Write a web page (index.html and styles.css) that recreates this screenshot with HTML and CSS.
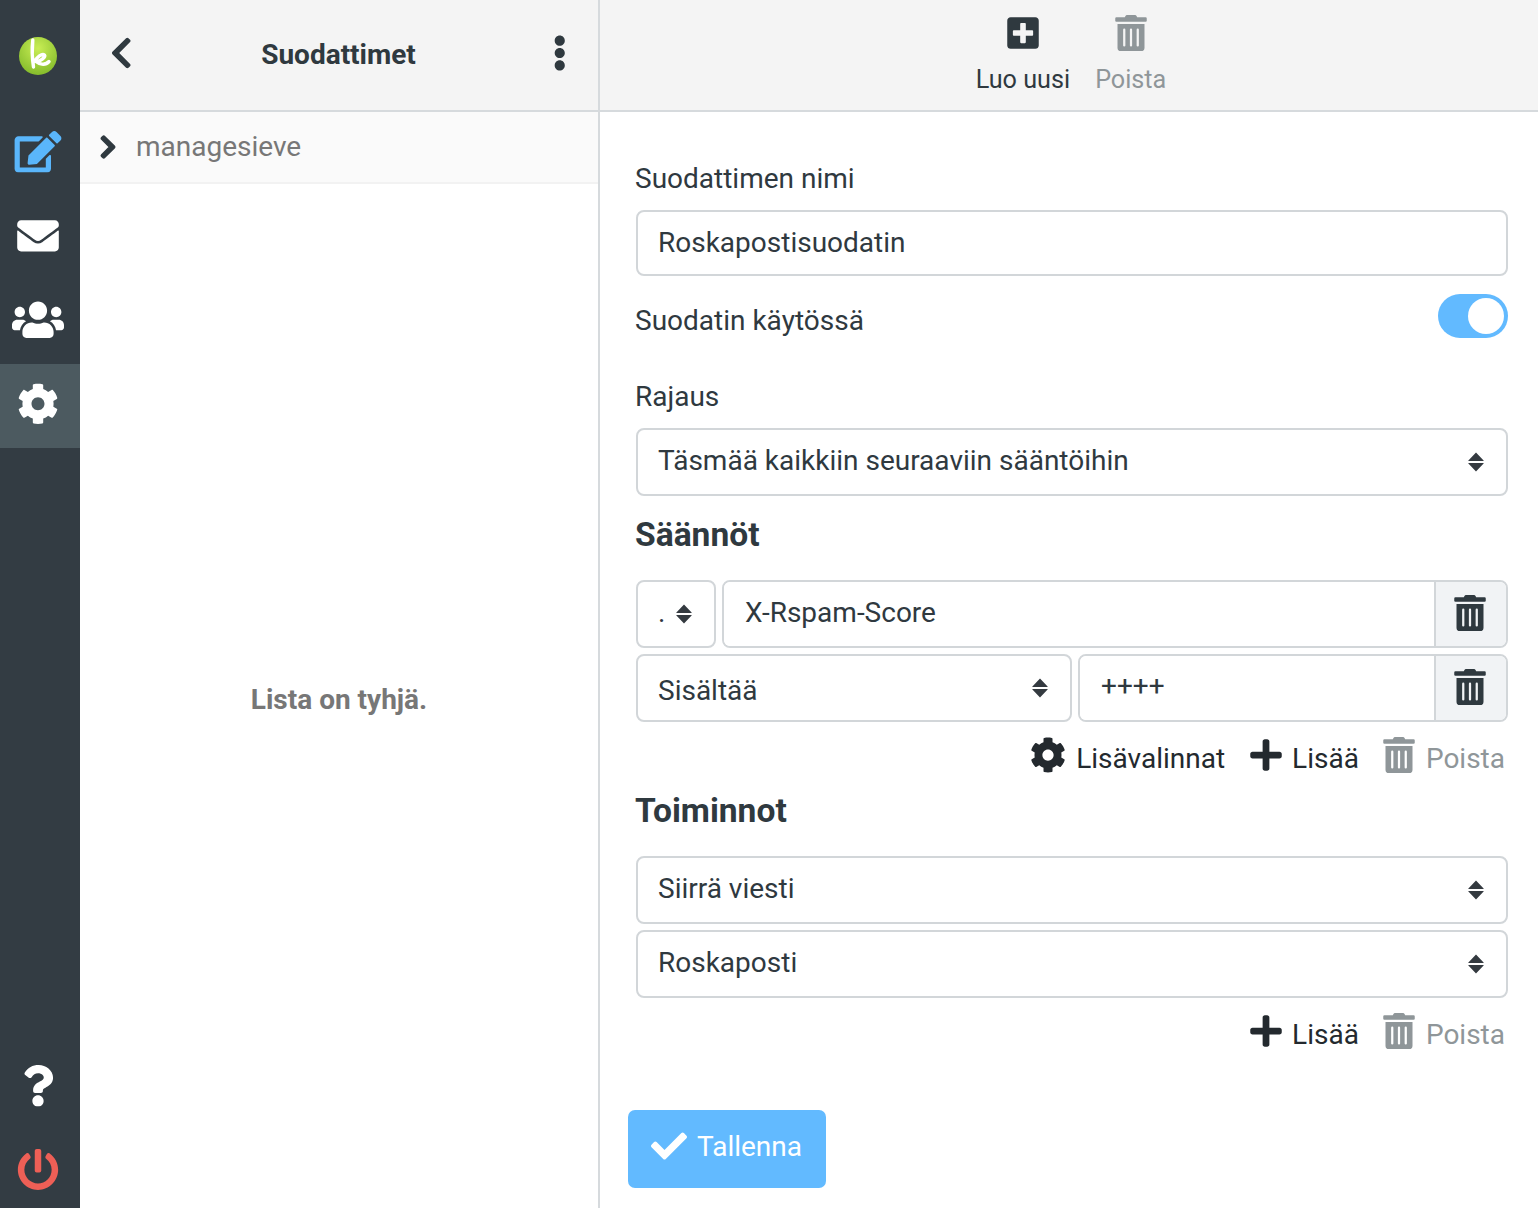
FILE: index.html
```html
<!DOCTYPE html>
<html lang="fi">
<head>
<meta charset="utf-8">
<title>Suodattimet</title>
<link rel="stylesheet" href="styles.css">
</head>
<body>
<svg class="defs" aria-hidden="true">
  <symbol id="i-chevron-left" viewBox="0 0 320 512"><path d="M34.52 239.03L228.87 44.69c9.37-9.37 24.57-9.37 33.94 0l22.67 22.67c9.36 9.36 9.37 24.52.04 33.9L131.49 256l154.02 154.75c9.34 9.38 9.32 24.54-.04 33.9l-22.67 22.67c-9.37 9.37-24.57 9.37-33.94 0L34.52 272.97c-9.37-9.37-9.37-24.57 0-33.94z"/></symbol>
  <symbol id="i-chevron-right" viewBox="0 0 320 512"><path d="M285.476 272.971L91.132 467.314c-9.373 9.373-24.569 9.373-33.941 0l-22.667-22.667c-9.357-9.357-9.375-24.522-.04-33.901L188.505 256 34.484 101.255c-9.335-9.379-9.317-24.544.04-33.901l22.667-22.667c9.373-9.373 24.569-9.373 33.941 0L285.475 239.03c9.373 9.372 9.373 24.568.001 33.941z"/></symbol>
  <symbol id="i-ellipsis" viewBox="0 0 192 512"><path d="M96 184c39.8 0 72 32.2 72 72s-32.2 72-72 72-72-32.2-72-72 32.2-72 72-72zM24 80c0 39.8 32.2 72 72 72s72-32.2 72-72S135.8 8 96 8 24 40.2 24 80zm0 352c0 39.8 32.2 72 72 72s72-32.2 72-72-32.2-72-72-72-72 32.2-72 72z"/></symbol>
  <symbol id="i-plus-square" viewBox="0 0 448 512"><path d="M400 32H48C21.5 32 0 53.5 0 80v352c0 26.5 21.5 48 48 48h352c26.5 0 48-21.5 48-48V80c0-26.5-21.5-48-48-48zm-32 252c0 6.6-5.4 12-12 12h-92v92c0 6.6-5.4 12-12 12h-56c-6.6 0-12-5.4-12-12v-92H92c-6.6 0-12-5.4-12-12v-56c0-6.6 5.4-12 12-12h92v-92c0-6.6 5.4-12 12-12h56c6.6 0 12 5.4 12 12v92h92c6.6 0 12 5.4 12 12v56z"/></symbol>
  <symbol id="i-trash" viewBox="0 0 448 512"><path d="M32 464a48 48 0 0 0 48 48h288a48 48 0 0 0 48-48V128H32zm272-256a16 16 0 0 1 32 0v224a16 16 0 0 1-32 0zm-96 0a16 16 0 0 1 32 0v224a16 16 0 0 1-32 0zm-96 0a16 16 0 0 1 32 0v224a16 16 0 0 1-32 0zM432 32H312l-9.4-18.7A24 24 0 0 0 281.1 0H166.8a23.72 23.72 0 0 0-21.4 13.3L136 32H16A16 16 0 0 0 0 48v32a16 16 0 0 0 16 16h416a16 16 0 0 0 16-16V48a16 16 0 0 0-16-16z"/></symbol>
  <symbol id="i-plus" viewBox="0 0 448 512"><path d="M416 208H272V64c0-17.67-14.33-32-32-32h-32c-17.67 0-32 14.33-32 32v144H32c-17.67 0-32 14.33-32 32v32c0 17.67 14.33 32 32 32h144v144c0 17.67 14.33 32 32 32h32c17.67 0 32-14.33 32-32V304h144c17.67 0 32-14.33 32-32v-32c0-17.67-14.33-32-32-32z"/></symbol>
  <symbol id="i-check" viewBox="0 0 512 512"><path d="M173.898 439.404l-166.4-166.4c-9.997-9.997-9.997-26.206 0-36.204l36.203-36.204c9.997-9.998 26.207-9.998 36.204 0L192 312.69 432.095 72.596c9.997-9.997 26.207-9.997 36.204 0l36.203 36.204c9.997 9.997 9.997 26.206 0 36.204l-294.4 294.401c-9.998 9.997-26.207 9.997-36.204-.001z"/></symbol>
  <symbol id="i-cog" viewBox="0 0 512 512"><path d="M487.4 315.7l-42.6-24.6c4.3-23.2 4.3-47 0-70.2l42.6-24.6c4.9-2.8 7.1-8.6 5.5-14-11.1-35.6-30-67.8-54.7-94.6-3.8-4.1-10-5.1-14.8-2.3L380.8 110c-17.9-15.4-38.5-27.3-60.8-35.1V25.8c0-5.6-3.9-10.5-9.4-11.7-36.7-8.2-74.3-7.8-109.2 0-5.5 1.2-9.4 6.1-9.4 11.7V75c-22.2 7.9-42.8 19.8-60.8 35.1L88.7 85.5c-4.9-2.8-11-1.9-14.8 2.3-24.7 26.7-43.6 58.9-54.7 94.6-1.7 5.4.6 11.2 5.5 14L67.3 221c-4.3 23.2-4.3 47 0 70.2l-42.6 24.6c-4.9 2.8-7.1 8.6-5.5 14 11.1 35.6 30 67.8 54.7 94.6 3.8 4.1 10 5.1 14.8 2.3l42.6-24.6c17.9 15.4 38.5 27.3 60.8 35.1v49.2c0 5.6 3.9 10.5 9.4 11.7 36.7 8.2 74.3 7.8 109.2 0 5.5-1.2 9.4-6.1 9.4-11.7v-49.2c22.2-7.9 42.8-19.8 60.8-35.1l42.6 24.6c4.9 2.8 11 1.9 14.8-2.3 24.7-26.7 43.6-58.9 54.7-94.6 1.5-5.5-.7-11.3-5.6-14.1zM256 336c-44.1 0-80-35.9-80-80s35.9-80 80-80 80 35.9 80 80-35.9 80-80 80z"/></symbol>
  <symbol id="i-envelope" viewBox="0 0 512 512"><path d="M502.3 190.8c3.9-3.1 9.7-.2 9.7 4.7V400c0 26.5-21.5 48-48 48H48c-26.5 0-48-21.5-48-48V195.6c0-5 5.7-7.8 9.7-4.7 22.4 17.4 52.1 39.5 154.1 113.6 21.1 15.4 56.7 47.8 92.2 47.6 35.7.3 72-32.8 92.3-47.6 102-74.1 131.6-96.3 154-113.7zM256 320c23.2.4 56.6-29.2 73.4-41.4 132.7-96.3 142.8-104.7 173.4-128.7 5.8-4.5 9.2-11.5 9.2-18.9v-19c0-26.5-21.5-48-48-48H48C21.5 64 0 85.5 0 112v19c0 7.4 3.4 14.3 9.2 18.9 30.6 23.9 40.7 32.4 173.4 128.7 16.8 12.2 50.2 41.8 73.4 41.4z"/></symbol>
  <symbol id="i-users" viewBox="0 0 640 512"><path d="M96 224c35.3 0 64-28.7 64-64s-28.7-64-64-64-64 28.7-64 64 28.7 64 64 64zm448 0c35.3 0 64-28.7 64-64s-28.7-64-64-64-64 28.7-64 64 28.7 64 64 64zm32 32h-64c-17.6 0-33.5 7.1-45.1 18.6 40.3 22.1 68.9 62 75.1 109.4h66c17.7 0 32-14.3 32-32v-32c0-35.3-28.7-64-64-64zm-256 0c61.9 0 112-50.1 112-112S381.9 32 320 32 208 82.1 208 144s50.1 112 112 112zm76.8 32h-8.3c-20.8 10-43.9 16-68.5 16s-47.6-6-68.5-16h-8.3C179.6 288 128 339.6 128 403.2V432c0 26.5 21.5 48 48 48h288c26.5 0 48-21.5 48-48v-28.8c0-63.6-51.6-115.2-115.2-115.2zm-223.7-13.4C161.5 263.1 145.6 256 128 256H64c-35.3 0-64 28.7-64 64v32c0 17.7 14.3 32 32 32h65.9c6.3-47.4 34.9-87.3 75.2-109.4z"/></symbol>
  <symbol id="i-edit" viewBox="0 0 576 512"><path d="M402.6 83.2l90.2 90.2c3.8 3.8 3.8 10 0 13.8L274.4 405.6l-92.8 10.3c-12.4 1.4-22.9-9.1-21.5-21.5l10.3-92.8L388.8 83.2c3.8-3.8 10-3.8 13.8 0zm162-22.9l-48.8-48.8c-15.2-15.2-39.9-15.2-55.2 0l-35.4 35.4c-3.8 3.8-3.8 10 0 13.8l90.2 90.2c3.8 3.8 10 3.8 13.8 0l35.4-35.4c15.2-15.3 15.2-40 0-55.2zM384 346.2V448H64V128h229.8c3.2 0 6.2-1.3 8.5-3.5l40-40c7.6-7.6 2.2-20.5-8.5-20.5H48C21.5 64 0 85.5 0 112v352c0 26.5 21.5 48 48 48h352c26.5 0 48-21.5 48-48V306.2c0-10.7-12.9-16-20.5-8.5l-40 40c-2.2 2.3-3.5 5.3-3.5 8.5z"/></symbol>
  <symbol id="i-question" viewBox="0 0 384 512"><path d="M202.021 0C122.202 0 70.503 32.703 29.914 91.026c-7.363 10.58-5.093 25.086 5.178 32.874l43.138 32.709c10.373 7.865 25.132 6.026 33.253-4.148 25.049-31.381 43.63-49.449 82.757-49.449 30.764 0 68.816 19.799 68.816 49.631 0 22.552-18.617 34.134-48.993 51.164-35.423 19.86-82.299 44.576-82.299 106.405V320c0 13.255 10.745 24 24 24h72.471c13.255 0 24-10.745 24-24v-5.773c0-42.86 125.268-44.645 125.268-160.627C377.504 66.256 286.902 0 202.021 0zM192 373.459c-38.196 0-69.271 31.075-69.271 69.271 0 38.195 31.075 69.27 69.271 69.27s69.271-31.075 69.271-69.271-31.075-69.27-69.271-69.27z"/></symbol>
  <symbol id="i-power" viewBox="0 0 512 512"><path d="M400 54.1c63 45 104 118.6 104 201.9 0 136.8-110.8 247.7-247.5 248C120 504.3 8.2 393 8 256.4 7.9 173.1 48.9 99.3 111.8 54.2c11.7-8.3 28-4.8 35 7.7L162.6 90c5.9 10.5 3.1 23.8-6.6 31-41.5 30.8-68 79.6-68 134.9-.1 92.3 74.5 168.1 168 168.1 91.6 0 168.6-74.2 168-169.1-.3-51.8-24.7-101.8-68.1-134-9.7-7.2-12.4-20.5-6.5-30.9l15.8-28.1c7-12.4 23.2-16.1 34.8-7.8zM296 264V24c0-13.3-10.7-24-24-24h-32c-13.3 0-24 10.7-24 24v240c0 13.3 10.7 24 24 24h32c13.3 0 24-10.7 24-24z"/></symbol>
  <symbol id="i-updown" viewBox="0 0 16 20"><path d="M8 0.4L15.6 8.6a.3.3 0 0 1-.2.5H.6a.3.3 0 0 1-.2-.5zM.6 10.9H15.4a.3.3 0 0 1 .2.5L8 19.6.4 11.4a.3.3 0 0 1 .2-.5z"/></symbol>
  <radialGradient id="logo-grad" cx="50%" cy="30%" r="70%"><stop offset="0" stop-color="#c9ee55"/><stop offset="1" stop-color="#85bc2c"/></radialGradient>
</svg>

<div class="app">
  <nav class="rail">
    <div class="rail-logo">
      <svg class="logo" viewBox="0 0 38 38"><circle cx="19" cy="19" r="19" fill="url(#logo-grad)"/><path class="logo-k" d="M13.8 3C12.8 12 13.2 22 14.5 30M15 25C18 20 23 16 25.5 18C27 20 21 25 17 24.5C20 27 26 29 30 24.5"/></svg>
    </div>
    <a class="rail-item icon-blue"><svg class="ic ic-rail"><use href="#i-edit"/></svg></a>
    <a class="rail-item"><svg class="ic ic-rail"><use href="#i-envelope"/></svg></a>
    <a class="rail-item"><svg class="ic ic-rail"><use href="#i-users"/></svg></a>
    <a class="rail-item rail-active"><svg class="ic ic-rail"><use href="#i-cog"/></svg></a>
    <div class="rail-foot">
      <a class="rail-item"><svg class="ic ic-rail"><use href="#i-question"/></svg></a>
      <a class="rail-item icon-red"><svg class="ic ic-rail"><use href="#i-power"/></svg></a>
    </div>
  </nav>

  <aside class="list-pane">
    <header class="list-head">
      <svg class="ic ic-back"><use href="#i-chevron-left"/></svg>
      <h1 class="list-title">Suodattimet</h1>
      <svg class="ic ic-dots"><use href="#i-ellipsis"/></svg>
    </header>
    <div class="set-row">
      <svg class="ic ic-chev"><use href="#i-chevron-right"/></svg>
      <span class="set-name">managesieve</span>
    </div>
    <div class="empty">Lista on tyhjä.</div>
  </aside>

  <main class="content">
    <div class="toolbar">
      <a class="tool"><svg class="ic ic-tool"><use href="#i-plus-square"/></svg><span>Luo uusi</span></a>
      <a class="tool tool-off"><svg class="ic ic-tool"><use href="#i-trash"/></svg><span>Poista</span></a>
    </div>
    <form class="form">
      <label class="label label-first">Suodattimen nimi</label>
      <input class="field field-name" type="text" value="Roskapostisuodatin">

      <div class="switch-row">
        <span class="switch-text">Suodatin käytössä</span>
        <span class="switch"><span class="knob"></span></span>
      </div>

      <label class="label label-scope">Rajaus</label>
      <div class="select"><span>Täsmää kaikkiin seuraaviin sääntöihin</span><svg class="updown"><use href="#i-updown"/></svg></div>

      <h2 class="section section-rules">Säännöt</h2>
      <div class="row">
        <div class="select select-dot"><span>.</span><svg class="updown"><use href="#i-updown"/></svg></div>
        <div class="group">
          <input class="group-input" type="text" value="X-Rspam-Score">
          <span class="group-btn"><svg class="ic ic-tool"><use href="#i-trash"/></svg></span>
        </div>
      </div>
      <div class="row">
        <div class="select select-half"><span>Sisältää</span><svg class="updown"><use href="#i-updown"/></svg></div>
        <div class="group">
          <input class="group-input group-input-value" type="text" value="++++">
          <span class="group-btn"><svg class="ic ic-tool"><use href="#i-trash"/></svg></span>
        </div>
      </div>
      <div class="actions">
        <a class="act act-opts"><svg class="ic ic-tool"><use href="#i-cog"/></svg><span>Lisävalinnat</span></a>
        <a class="act act-add"><svg class="ic ic-act"><use href="#i-plus"/></svg><span>Lisää</span></a>
        <a class="act act-off"><svg class="ic ic-act"><use href="#i-trash"/></svg><span>Poista</span></a>
      </div>

      <h2 class="section section-actions">Toiminnot</h2>
      <div class="select select-action"><span>Siirrä viesti</span><svg class="updown"><use href="#i-updown"/></svg></div>
      <div class="select select-folder"><span>Roskaposti</span><svg class="updown"><use href="#i-updown"/></svg></div>
      <div class="actions actions-two">
        <a class="act act-add"><svg class="ic ic-act"><use href="#i-plus"/></svg><span>Lisää</span></a>
        <a class="act act-off"><svg class="ic ic-act"><use href="#i-trash"/></svg><span>Poista</span></a>
      </div>

      <button class="save" type="button"><svg class="ic ic-tool"><use href="#i-check"/></svg><span>Tallenna</span></button>
    </form>
  </main>
</div>
</body>
</html>
```

FILE: styles.css
```css
* { box-sizing: border-box; }
html, body { margin: 0; height: 100%; overflow: hidden; }
body {
  font-family: Roboto, "Liberation Sans", sans-serif;
  font-size: 28px;
  color: #2f393f;
  background: #fff;
}
.defs { position: absolute; width: 0; height: 0; }
.app { display: flex; height: 1208px; }
.ic { display: block; fill: currentColor; flex: none; }

/* icon rail */
.rail {
  width: 80px;
  flex: none;
  background: #333c43;
  color: #fff;
  display: flex;
  flex-direction: column;
  overflow: hidden;
}
.rail-logo {
  height: 110px;
  display: flex;
  align-items: center;
  justify-content: center;
  padding-right: 4px;
}
.logo { width: 38px; height: 38px; display: block; margin-top: 1px; }
.logo-k { fill: none; stroke: #fff; stroke-width: 3.4; stroke-linecap: round; stroke-linejoin: round; }
.rail-item {
  height: 84px;
  display: flex;
  align-items: center;
  justify-content: center;
  padding-right: 4px;
}
.ic-rail { width: 54px; height: 41.6px; }
.icon-blue { color: #5ab6fb; }
.icon-red { color: #ee5f56; }
.rail-active { background: #4c5a60; margin-top: 2px; padding-bottom: 4px; }
.rail-foot { margin-top: auto; margin-bottom: -4px; }

/* list pane */
.list-pane {
  width: 520px;
  flex: none;
  border-right: 2px solid #d6dadd;
  display: flex;
  flex-direction: column;
}
.list-head {
  height: 112px;
  flex: none;
  background: #f4f4f4;
  border-bottom: 2px solid #d6dadd;
  display: flex;
  align-items: center;
  padding: 0 32px 4px 30px;
}
.ic-back { width: 22.5px; height: 36px; }
.list-title {
  flex: 1;
  margin: 0;
  text-align: center;
  font-size: 28px;
  font-weight: 700;
  line-height: 32px;
  padding: 4px 8px 0 0;
}
.ic-dots { width: 13.5px; height: 36px; }
.set-row {
  height: 72px;
  flex: none;
  background: #fafafa;
  border-bottom: 2px solid #f2f2f2;
  display: flex;
  align-items: center;
  gap: 20px;
  padding-left: 20px;
  color: #777;
}
.set-name { padding-bottom: 2px; }
.ic-chev { width: 16px; height: 26px; color: #2f393f; stroke: currentColor; stroke-width: 30; }
.empty {
  flex: 1;
  display: flex;
  align-items: center;
  justify-content: center;
  color: #777;
  font-weight: 700;
  padding: 6px 0 0;
}

/* main */
.content { flex: 1; min-width: 0; display: flex; flex-direction: column; }
.toolbar {
  height: 112px;
  flex: none;
  background: #f4f4f4;
  border-bottom: 2px solid #d6dadd;
  display: flex;
  justify-content: center;
  gap: 25px;
  padding: 15px 0 0 4px;
}
.tool {
  display: flex;
  flex-direction: column;
  align-items: center;
  gap: 0;
  font-size: 25.2px;
  line-height: 30px;
}
.tool span { margin-top: 14px; }
.tool-off { color: #8f9699; }
.ic-tool { width: 36px; height: 36px; }
.ic-act { width: 32px; height: 36px; }

.form {
  flex: 1;
  padding: 0 30px 0 36px;
  display: flex;
  flex-direction: column;
}
.label { display: block; line-height: 32px; margin-left: -1px; }
.label-first { margin-top: 51px; margin-bottom: 15px; }
.label-scope { margin-top: 43px; margin-bottom: 15px; }
.field, .group-input {
  font: inherit;
  color: inherit;
  outline: none;
  background: #fff;
}
.field {
  height: 66px;
  border: 2px solid #d2d6d9;
  border-radius: 8px;
  padding: 0 20px 2px;
  width: 100%;
}
.switch-row {
  height: 44px;
  margin-top: 18px;
  display: flex;
  align-items: center;
  justify-content: space-between;
  margin-left: -1px;
}
.switch-text { padding-top: 8px; }
.switch {
  width: 70px;
  height: 44px;
  border-radius: 22px;
  background: #62baff;
  padding: 4px;
  display: flex;
  justify-content: flex-end;
}
.knob { width: 36px; height: 36px; border-radius: 50%; background: #fff; }

.select {
  height: 68px;
  border: 2px solid #d2d6d9;
  border-radius: 8px;
  padding: 0 22px 0 20px;
  display: flex;
  align-items: center;
  justify-content: space-between;
  flex: none;
}
.select span { padding-bottom: 4px; }
.updown { width: 16px; height: 20px; fill: #343a40; display: block; flex: none; }
.select-dot { width: 80px; padding-right: 22px; }
.select-half { width: 436px; padding-right: 22px; }
.select-half span { padding: 4px 0 0; }
.select-action { margin-bottom: 6px; }

.section { margin: 0; font-size: 33.6px; font-weight: 700; line-height: 38px; }
.section-rules { margin-top: 20px; margin-bottom: 26px; margin-left: -1px; }
.section-actions { margin-top: 19px; margin-bottom: 26px; margin-left: -1px; }

.row { display: flex; gap: 6px; height: 68px; margin-bottom: 6px; }
.group {
  flex: 1;
  min-width: 0;
  display: flex;
  border: 2px solid #d2d6d9;
  border-radius: 8px;
  overflow: hidden;
}
.group-input {
  flex: 1;
  min-width: 0;
  border: 0;
  padding: 0 20px 4px 21px;
}
.group-input-value { padding-bottom: 5px; }
.group-btn {
  width: 72px;
  flex: none;
  background: #f1f3f5;
  border-left: 2px solid #d2d6d9;
  display: flex;
  align-items: center;
  justify-content: center;
  padding: 0 2px 2px 0;
  color: #2f393f;
}

.actions {
  display: flex;
  justify-content: flex-end;
  gap: 25px;
  height: 36px;
  margin-top: 9px;
  padding-right: 3px;
}
.actions-two { margin-top: 15px; }
.act { display: flex; align-items: center; gap: 11px; line-height: 32px; color: #23292e; }
.act span { padding-top: 7px; }
.act-opts { gap: 10px; }
.act-add { gap: 10px; }
.act-off { color: #8f9699; margin-left: -1px; }

.save {
  align-self: flex-start;
  margin: 61px 0 0 -8px;
  width: 198px;
  height: 78px;
  border: 0;
  border-radius: 7px;
  background: #62baff;
  color: #fff;
  font: inherit;
  display: flex;
  align-items: center;
  gap: 10px;
  padding: 0 0 6px 23px;
}
```
